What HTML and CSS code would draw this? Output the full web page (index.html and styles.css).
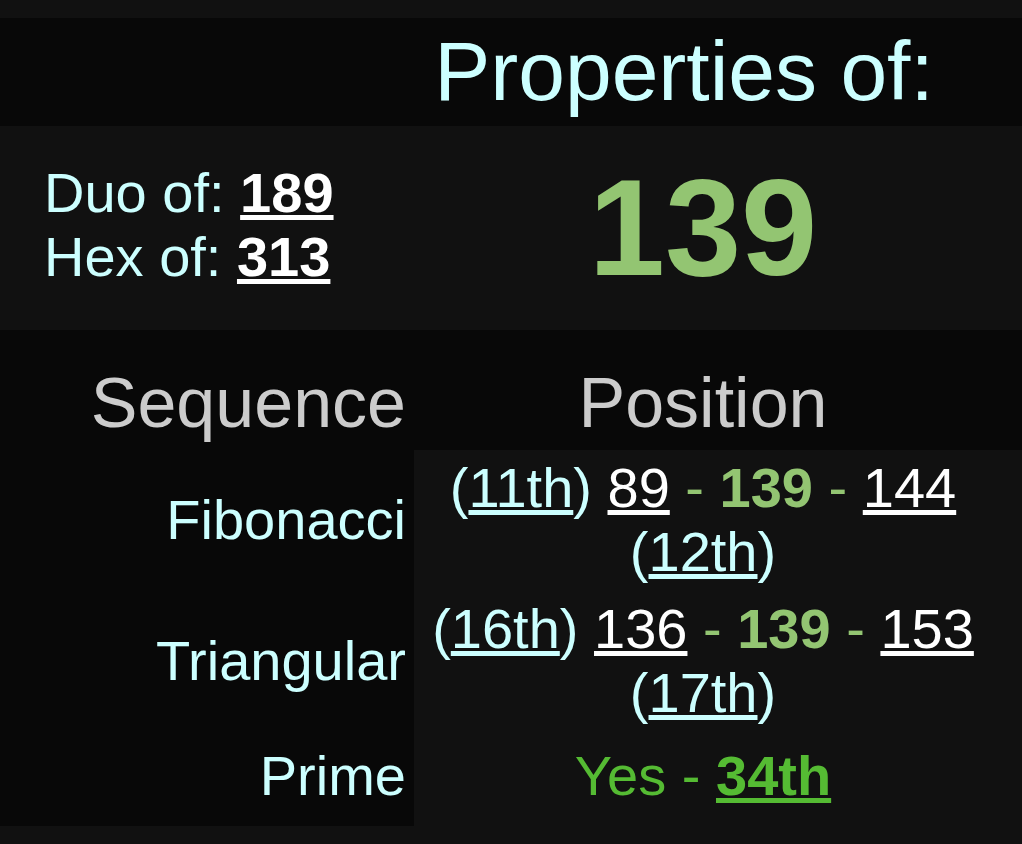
FILE: index.html
```html
<!DOCTYPE html>
<html lang="en">
<head>
<meta charset="utf-8">
<title>Properties of 139</title>
<link rel="stylesheet" href="styles.css">
</head>
<body>
<table class="props">
  <tr class="title-row">
    <th class="corner"></th>
    <th class="title">Properties of:</th>
  </tr>
  <tr class="number-row">
    <td class="aliases">Duo of: <a class="num" href="#">189</a><br>Hex of: <a class="num" href="#">313</a></td>
    <td class="big">139</td>
  </tr>
  <tr class="head-row">
    <th class="label">Sequence</th>
    <th class="pos">Position</th>
  </tr>
  <tr class="seq-row">
    <th class="label">Fibonacci</th>
    <td class="pos">(<a class="ord" href="#">11th</a>) <a class="nb" href="#">89</a><span class="sep"> - </span><b class="cur">139</b><span class="sep"> - </span><a class="nb" href="#">144</a> (<a class="ord" href="#">12th</a>)</td>
  </tr>
  <tr class="seq-row">
    <th class="label">Triangular</th>
    <td class="pos">(<a class="ord" href="#">16th</a>) <a class="nb" href="#">136</a><span class="sep"> - </span><b class="cur">139</b><span class="sep"> - </span><a class="nb" href="#">153</a> (<a class="ord" href="#">17th</a>)</td>
  </tr>
  <tr class="prime-row">
    <th class="label">Prime</th>
    <td class="pos prime">Yes - <a class="prime-link" href="#">34th</a></td>
  </tr>
</table>
</body>
</html>
```

FILE: styles.css
```css
html, body {
  margin: 0;
  background: #111111;
}

body {
  padding-top: 18px;
  font-family: "Liberation Sans", Arial, Helvetica, sans-serif;
  color: #ccffff;
}

.props {
  width: 100%;
  border-collapse: collapse;
  border-spacing: 0;
  font-size: 56px;
  line-height: 64px;
}

.props th,
.props td {
  padding: 0;
  font-weight: normal;
  color: #ccffff;
}

.props th {
  background: #080808;
}

.props td {
  background: #111111;
}

.props .corner {
  width: 414px;
}

.props .title {
  font-size: 84px;
  line-height: 98px;
  text-align: center;
  padding: 4px 68px 6px 0;
}

.props .aliases {
  text-align: left;
  vertical-align: middle;
  padding: 0 0 6px 44px;
}

.props .big {
  font-size: 137px;
  line-height: 160px;
  font-weight: bold;
  color: #93c572;
  text-align: center;
  padding: 22px 30px 22px 0;
}

.num {
  color: #ffffff;
  font-weight: bold;
  text-decoration: underline;
}

.props .head-row th {
  font-size: 70px;
  line-height: 80px;
  color: #cccccc;
  padding-top: 33px;
  padding-bottom: 7px;
}

.props .label {
  text-align: right;
  vertical-align: middle;
  padding-right: 8px;
}

.props .pos {
  text-align: center;
  padding-right: 30px;
}

.props .seq-row th,
.props .seq-row td {
  padding-top: 6px;
  padding-bottom: 7px;
}

.props .prime-row th,
.props .prime-row td {
  padding-top: 12px;
  padding-bottom: 18px;
}

.ord {
  color: #ccffff;
  text-decoration: underline;
}

.nb {
  color: #ffffff;
  text-decoration: underline;
}

.sep {
  color: #93c572;
}

.cur {
  color: #93c572;
  font-weight: bold;
}

.props .prime {
  color: #55bb33;
}

.prime-link {
  color: #55bb33;
  font-weight: bold;
  text-decoration: underline;
}
```
